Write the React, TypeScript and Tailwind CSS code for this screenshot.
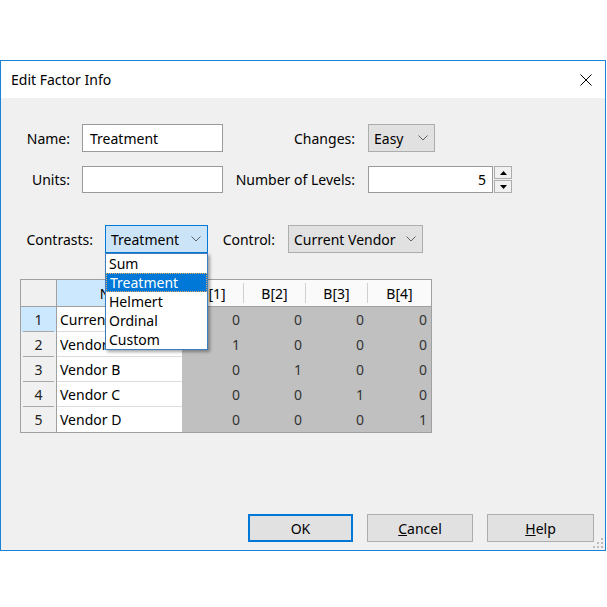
import React from 'react'

const font = { fontFamily: '"Noto Sans", "Open Sans", Arial, sans-serif' }

const rows: [string, number[]][] = [
  ['Current Vendor', [0, 0, 0, 0]],
  ['Vendor A', [1, 0, 0, 0]],
  ['Vendor B', [0, 1, 0, 0]],
  ['Vendor C', [0, 0, 1, 0]],
  ['Vendor D', [0, 0, 0, 1]],
]

function Chevron() {
  return (
    <svg width="10" height="6" viewBox="0 0 10 6" className="shrink-0">
      <path d="M0.5 0.5 L5 5 L9.5 0.5" fill="none" stroke="#606060" strokeWidth="1" />
    </svg>
  )
}

function Combo({ value, w, active }: { value: string; w: string; active?: boolean }) {
  return (
    <div
      className={`${w} h-[28px] flex items-center justify-between pl-[5px] pr-[6px] border ${
        active ? 'bg-[#cce4f7] border-[#0078d7]' : 'bg-[#e1e1e1] border-[#adadad]'
      }`}
    >
      <span>{value}</span>
      <Chevron />
    </div>
  )
}

export default function App() {
  return (
    <div className="w-[607px] h-[607px] bg-white pt-[60px] text-[14px] text-black" style={font}>
      <div className="w-[606px] h-[491px] border border-[#1883d7] flex flex-col">
        {/* title bar */}
        <div className="h-[37px] shrink-0 bg-white flex items-center justify-between pl-[10px] pr-[13px]">
          <span className="text-[14px]">Edit Factor Info</span>
          <svg width="12" height="12" viewBox="0 0 12 12">
            <path d="M0.5 0.5 L11.5 11.5 M11.5 0.5 L0.5 11.5" stroke="#000" strokeWidth="1" />
          </svg>
        </div>

        <div className="flex-1 bg-[#f0f0f0] relative flex flex-col">
          {/* name / changes */}
          <div className="mt-[26px] flex items-center h-[28px]">
            <div className="w-[69px] text-right">Name:</div>
            <div className="ml-[12px] w-[141px] h-[28px] bg-white border border-[#9a9a9a] flex items-center pl-[7px]">
              Treatment
            </div>
            <div className="w-[132px] text-right">Changes:</div>
            <div className="ml-[13px]">
              <Combo value="Easy" w="w-[67px]" />
            </div>
          </div>

          {/* units / levels */}
          <div className="mt-[14px] flex items-center h-[27px]">
            <div className="w-[69px] text-right">Units:</div>
            <div className="ml-[12px] w-[141px] h-[27px] bg-white border border-[#9a9a9a]" />
            <div className="w-[132px] text-right">Number of Levels:</div>
            <div className="ml-[13px] w-[125px] h-[27px] bg-white border border-[#9a9a9a] flex items-center justify-end pr-[6px]">
              5
            </div>
            <div className="ml-[1px] w-[18px] h-[27px] flex flex-col gap-[1px]">
              <div className="flex-1 bg-[#f0f0f0] border border-[#adadad] flex items-center justify-center">
                <svg width="7" height="4" viewBox="0 0 7 4">
                  <path d="M0 4 L3.5 0 L7 4 Z" fill="#000" />
                </svg>
              </div>
              <div className="flex-1 bg-[#f0f0f0] border border-[#adadad] flex items-center justify-center">
                <svg width="7" height="4" viewBox="0 0 7 4">
                  <path d="M0 0 L3.5 4 L7 0 Z" fill="#000" />
                </svg>
              </div>
            </div>
          </div>

          {/* contrasts / control */}
          <div className="mt-[32px] flex items-center h-[28px]">
            <div className="w-[92px] text-right">Contrasts:</div>
            <div className="ml-[12px] relative z-10">
              <Combo value="Treatment" w="w-[103px]" active />
              <div className="absolute top-full left-0 w-[103px] h-[97px] bg-white border border-[#3c7fc0] shadow-[2px_2px_3px_rgba(0,0,0,0.35)] flex flex-col">
                {['Sum', 'Treatment', 'Helmert', 'Ordinal', 'Custom'].map((item) => (
                  <div
                    key={item}
                    className={`h-[19px] flex items-center pl-[3px] leading-none ${
                      item === 'Treatment'
                        ? 'bg-[#0078d7] text-white border border-dotted border-[#f0b060]'
                        : ''
                    }`}
                  >
                    {item}
                  </div>
                ))}
              </div>
            </div>
            <div className="w-[67px] text-right">Control:</div>
            <div className="ml-[13px]">
              <Combo value="Current Vendor" w="w-[135px]" />
            </div>
          </div>

          {/* grid */}
          <div className="mt-[26px] ml-[19px] w-[412px] border border-[#a0a0a0] bg-[#c0c0c0]">
            <div className="grid grid-cols-[36px_125px_62px_62px_62px_63px] h-[27px] border-b border-[#a0a0a0]">
              <div className="bg-[#f0f0f0] border-r border-[#a0a0a0]" />
              <div className="bg-[#cce8ff] flex items-center justify-center">Name</div>
              {['B[1]', 'B[2]', 'B[3]', 'B[4]'].map((h, i) => (
                <div key={h} className="bg-[#fafafa] flex items-center">
                  <span className="flex-1 text-center">{h}</span>
                  {i < 3 && <div className="w-px h-[20px] bg-[#d0d0d0]" />}
                </div>
              ))}
            </div>
            {rows.map(([name, vals], r) => (
              <div key={name} className="grid grid-cols-[36px_125px_62px_62px_62px_63px] h-[25px]">
                <div
                  className={`flex flex-col border-r border-[#a0a0a0] ${
                    r === 0 ? 'bg-[#cce8ff]' : 'bg-[#f0f0f0]'
                  }`}
                >
                  <div className="flex-1 flex items-center justify-center text-[#222]">{r + 1}</div>
                  {r < 4 && <div className="h-px mx-[2px] bg-[#a8a8a8]" />}
                </div>
                <div
                  className={`bg-white flex items-center pl-[3px] overflow-hidden whitespace-nowrap ${
                    r < 4 ? 'border-b border-[#dcdcdc]' : ''
                  }`}
                >
                  {name}
                </div>
                {vals.map((v, i) => (
                  <div key={i} className="flex items-center justify-end pr-[4px] text-[#333]">
                    {v}
                  </div>
                ))}
              </div>
            ))}
          </div>

          {/* buttons */}
          <div className="mt-auto flex justify-end gap-[14px] pr-[11px] pb-[8px]">
            <button className="w-[105px] h-[28px] bg-[#e1e1e1] border-2 border-[#0078d7]">OK</button>
            <button className="w-[106px] h-[28px] bg-[#e1e1e1] border border-[#adadad]">
              <span className="underline">C</span>ancel
            </button>
            <button className="w-[107px] h-[28px] bg-[#e1e1e1] border border-[#adadad]">
              <span className="underline">H</span>elp
            </button>
          </div>

          {/* size grip */}
          <svg width="10" height="10" viewBox="0 0 10 10" className="absolute right-[2px] bottom-[2px]">
            <g fill="#bcbcbc">
              <rect x="8" y="0" width="2" height="2" />
              <rect x="4" y="4" width="2" height="2" />
              <rect x="8" y="4" width="2" height="2" />
              <rect x="0" y="8" width="2" height="2" />
              <rect x="4" y="8" width="2" height="2" />
              <rect x="8" y="8" width="2" height="2" />
            </g>
          </svg>
        </div>
      </div>
    </div>
  )
}
